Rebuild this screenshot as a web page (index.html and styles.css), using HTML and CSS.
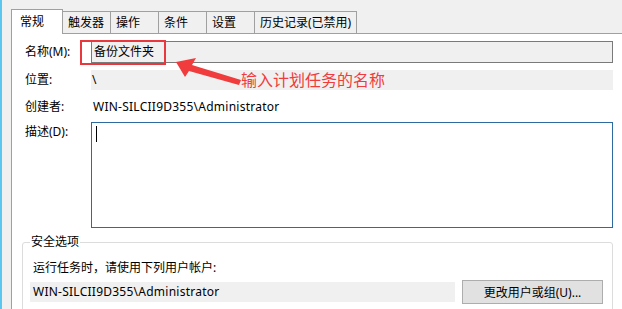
FILE: index.html
```html
<!DOCTYPE html>
<html lang="zh-CN">
<head>
<meta charset="UTF-8">
<title>常规</title>
<link rel="stylesheet" href="styles.css">
</head>
<body>

<div class="window">
  <div class="tabs">
    <div class="tab active">常规</div>
    <div class="tab">触发器</div>
    <div class="tab">操作</div>
    <div class="tab">条件</div>
    <div class="tab">设置</div>
    <div class="tab">历史记录(已禁用)</div>
  </div>

  <div class="panel">
    <div class="form">
      <div class="label row-name">名称(M):</div>
      <div class="input">备份文件夹</div>

      <div class="label row-loc">位置:</div>
      <div class="readonly row-loc">\</div>

      <div class="label row-creator">创建者:</div>
      <div class="value row-creator">WIN-SILCII9D355\Administrator</div>

      <div class="label row-desc">描述(D):</div>
      <div class="textarea row-desc"><span class="caret"></span></div>
    </div>

    <fieldset class="group">
      <legend>安全选项</legend>
      <div class="group-text">运行任务时，请使用下列用户帐户:</div>
      <div class="account">
        <div class="account-name">WIN-SILCII9D355\Administrator</div>
        <button class="btn">更改用户或组(U)...</button>
      </div>
    </fieldset>

    <!-- annotation -->
    <div class="mark-box"></div>
    <svg class="mark-arrow" width="80" height="40" viewBox="0 0 80 40">
      <polygon points="1,5 21,1 17,8 66,23 64,28 14,14 10,20" fill="#f03c3c"/>
    </svg>
    <div class="mark-text">输入计划任务的名称</div>
  </div>
</div>

</body>
</html>
```

FILE: styles.css
```css
/* task properties dialog - general tab */
body {
  margin: 0;
  background-color: #f0f0f0;
  font-family: "Noto Sans", "Noto Sans CJK SC", sans-serif;
  font-size: 12px;
  color: #000;
}
.window {
  height: 309px;
  border-left: 2px solid #5bc6ef;
  padding: 10px 0 0 9px;
  box-sizing: border-box;
  overflow: hidden;
}

/* tabs */
.tabs {
  display: flex;
  align-items: flex-end;
  height: 23px;
}
.tab {
  height: 21px;
  line-height: 21px;
  min-width: 37px;
  padding: 0 5px 0 5px;
  border-top: 1px solid #a0a0a0;
  border-right: 1px solid #a0a0a0;
  background-color: #f0f0f0;
  white-space: nowrap;
}
.tab.active {
  height: 24px;
  line-height: 23px;
  min-width: 0;
  width: 42px;
  padding: 0 0 0 8px;
  border-left: 1px solid #a0a0a0;
  background-color: #fff;
  margin-bottom: -1px;
  position: relative;
  z-index: 1;
}

/* panel */
.panel {
  position: relative;
  height: 276px;
  border-top: 1px solid #a0a0a0;
  border-left: 1px solid #a0a0a0;
  background-color: #fff;
  padding: 7px 9px 0 13px;
  box-sizing: border-box;
}
.form {
  display: grid;
  grid-template-columns: 66px 1fr;
  row-gap: 7px;
}
.label {
  line-height: 20px;
  white-space: nowrap;
}
.label.row-name {
  line-height: 22px;
}
.input {
  height: 22px;
  line-height: 20px;
  box-sizing: border-box;
  border: 1px solid #7a7a7a;
  background-color: #f0f0f0;
  padding-left: 2px;
}
.readonly {
  height: 20px;
  line-height: 20px;
  background-color: #f0f0f0;
  padding-left: 1px;
}
.value {
  line-height: 20px;
  padding-left: 2px;
  letter-spacing: 0.25px;
}
.row-desc {
  margin-top: -2px;
}
.textarea {
  height: 106px;
  box-sizing: border-box;
  border: 1px solid #2d6aa0;
  padding: 3px 4px;
}
.caret {
  display: block;
  width: 1px;
  height: 16px;
  background-color: #000;
}

/* security group */
.group {
  margin: 6px 0 0 -3px;
  padding: 0 8px 0 7px;
  border: 1px solid #dcdcdc;
  border-radius: 3px;
  height: 80px;
}
.group legend {
  padding: 0 1px;
  line-height: 16px;
}
.group-text {
  line-height: 20px;
  margin-top: 8px;
  padding-left: 3px;
}
.account {
  display: flex;
  align-items: center;
  gap: 7px;
  margin-top: 2px;
}
.account-name {
  width: 425px;
  height: 20px;
  line-height: 20px;
  background-color: #f0f0f0;
  padding-left: 3px;
  box-sizing: border-box;
  letter-spacing: 0.25px;
}
.btn {
  width: 141px;
  height: 24px;
  border: 1px solid #adadad;
  background-color: #e1e1e1;
  font-family: inherit;
  font-size: 12px;
  padding: 0;
}

/* red annotation */
.mark-box {
  position: absolute;
  left: 68px;
  top: 6px;
  width: 86px;
  height: 25px;
  border: 2px solid #e8383d;
  box-sizing: border-box;
}
.mark-arrow {
  position: absolute;
  left: 163px;
  top: 23px;
}
.mark-text {
  position: absolute;
  left: 229px;
  top: 35px;
  font-size: 16px;
  line-height: 20px;
  color: #f03c3c;
  font-family: "Noto Sans CJK SC", sans-serif;
}
```
